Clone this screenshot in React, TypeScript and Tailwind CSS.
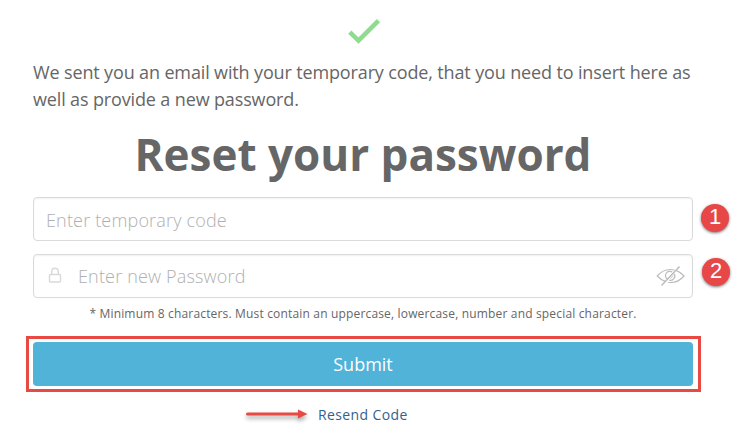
import { useState } from "react";

function CheckMark() {
  return (
    <svg className="ml-[314px] block" width="34" height="26" viewBox="0 0 34 26" fill="none">
      <path d="M2.800 14.200L11.500 22.600L31.500 2.700" stroke="#8edc90" strokeWidth="4.600" />
    </svg>
  );
}

function LockIcon() {
  return (
    <svg className="-mt-0.5 block shrink-0" width="14" height="16" viewBox="0 0 14 16" fill="none" stroke="#d9d9d9" strokeWidth="1.4">
      <rect x="1.500" y="7.500" width="11" height="7.500" rx="1" />
      <path d="M3.700 7.500V4.500a3.300 3.300 0 0 1 6.600 0v3" />
    </svg>
  );
}

function HiddenEyeIcon() {
  return (
    <svg className="block" width="30" height="22" viewBox="0 0 30 22" fill="none" stroke="#bdbdbd" strokeWidth="1.2">
      <path d="M9.300 16.400C6 15.300 3.300 13.200 1.300 11C4.300 7.300 8.800 4.500 14.500 4.500c1.400 0 2.700.2 3.900.5" />
      <path d="M20.500 5.600c3.100 1.200 5.700 3.200 7.500 5.400c-3 3.600-7.500 6.500-13.300 6.500c-.9 0-1.700-.1-2.500-.2" />
      <path d="M11.500 14.300a4.300 4.300 0 0 1 4.700-7.300M18.200 8.800a4.300 4.300 0 0 1-4.900 6.300" />
      <path d="M16 9L12.800 12.500M17.300 10.500L14.500 13.500" strokeWidth="0.8" />
      <path d="M23.500 1.500L5.500 20.500" strokeWidth="1.500" />
    </svg>
  );
}

function Marker({ value }: { value: number }) {
  return (
    <span className="grid h-7 w-7 shrink-0 place-items-center rounded-full bg-[#e84748] pb-0.5 font-['Liberation_Sans',sans-serif] text-[22px] leading-none text-white shadow-[0_1px_3px_rgba(0,0,0,0.55)]">
      {value}
    </span>
  );
}

function Arrow() {
  return (
    <svg className="-mt-0.5 block drop-shadow-[0_3px_2px_rgba(0,0,0,0.35)]" width="62" height="10" viewBox="0 0 62 10">
      <path d="M1.500 5H53" stroke="#e84a43" strokeWidth="3" strokeLinecap="round" />
      <path d="M52 0.500L61.500 5L52 9.500Z" fill="#e84a43" />
    </svg>
  );
}

export default function App() {
  const [code, setCode] = useState("");
  const [password, setPassword] = useState("");
  const [visible, setVisible] = useState(false);

  return (
    <main className="h-[446px] w-[741px] overflow-hidden bg-white pl-[33px] pt-[18px] font-['Open_Sans',sans-serif] text-[#666666]">
      <div className="w-[660px]">
        <CheckMark />
        <p className="mt-[15px] text-[18px] leading-[27px] tracking-[-0.14px]">
          We sent you an email with your temporary code, that you need to insert here as well as provide a new password.
        </p>
        <h1 className="mt-[14px] text-center text-[44px] font-bold leading-[54px]">Reset your password</h1>
      </div>

      <form onSubmit={(event) => event.preventDefault()}>
        <div className="mt-4 flex gap-2">
          <input
            className="h-11 w-[660px] rounded border border-[#dadada] px-3 pt-px text-[18px] font-light tracking-[0.17px] shadow-[inset_0_1px_2px_rgba(0,0,0,0.06)] outline-none placeholder:text-[#b0b0b0]"
            placeholder="Enter temporary code"
            value={code}
            onChange={(event) => setCode(event.target.value)}
          />
          <div className="pt-[7px]">
            <Marker value={1} />
          </div>
        </div>

        <div className="mt-[13px] flex gap-[9px]">
          <div className="flex h-11 w-[660px] items-center rounded border border-[#dadada] pl-[14px] pr-[6px] shadow-[inset_0_1px_2px_rgba(0,0,0,0.06)]">
            <LockIcon />
            <input
              className="ml-4 min-w-0 flex-1 pt-px text-[18px] font-light tracking-[0.17px] outline-none placeholder:text-[#b0b0b0]"
              type={visible ? "text" : "password"}
              placeholder="Enter new Password"
              value={password}
              onChange={(event) => setPassword(event.target.value)}
            />
            <button type="button" onClick={() => setVisible((value) => !value)} aria-label="Toggle password">
              <HiddenEyeIcon />
            </button>
          </div>
          <div className="pt-1">
            <Marker value={2} />
          </div>
        </div>

        <p className="mt-[7px] w-[660px] text-center text-[12px] leading-[18px] tracking-[0.168px]">
          * Minimum 8 characters. Must contain an uppercase, lowercase, number and special character.
        </p>

        <div className="-ml-[7px] mt-[13px] h-14 w-[675px] border-[3px] border-[#e84a43] px-1 py-[3px]">
          <button className="h-11 w-[660px] rounded bg-[#50b3d7] text-[18px] text-white">Submit</button>
        </div>
      </form>

      <div className="mt-[11px] flex items-center gap-[10px] pl-[213px]">
        <Arrow />
        <a href="#" className="text-[14px] leading-6 tracking-[0.38px] text-[#365f8d]">
          Resend Code
        </a>
      </div>
    </main>
  );
}
